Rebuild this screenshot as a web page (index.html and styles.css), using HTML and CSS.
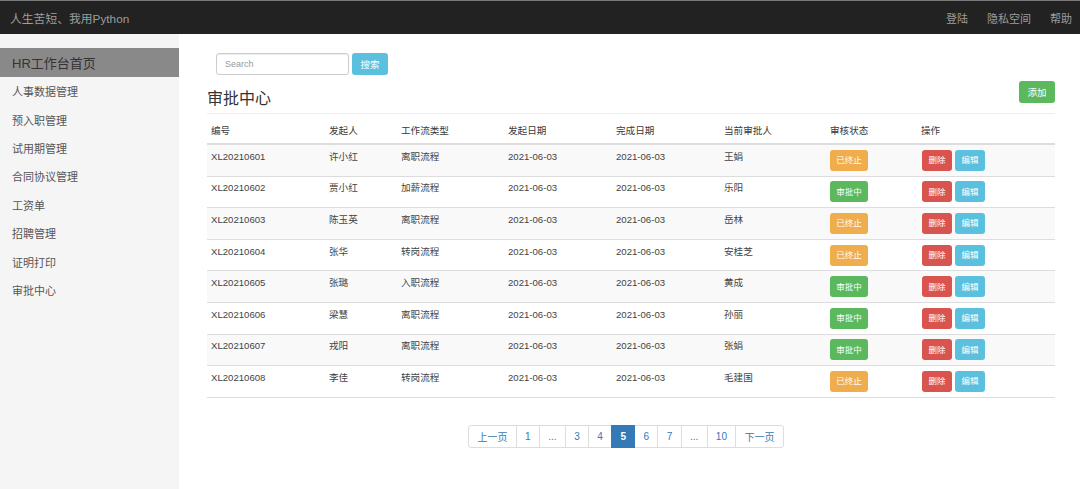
FILE: index.html
```html
<!DOCTYPE html>
<html lang="zh-CN">
<head>
<meta charset="utf-8">
<title>审批中心</title>
<link rel="stylesheet" href="styles.css">
</head>
<body>
<header class="navbar">
  <a class="brand">人生苦短、我用Python</a>
  <nav class="nav-right">
    <a>登陆</a>
    <a>隐私空间</a>
    <a>帮助</a>
  </nav>
</header>
<div class="main">
  <aside class="sidebar">
    <a class="side-item active">HR工作台首页</a>
    <a class="side-item">人事数据管理</a>
    <a class="side-item">预入职管理</a>
    <a class="side-item">试用期管理</a>
    <a class="side-item">合同协议管理</a>
    <a class="side-item">工资单</a>
    <a class="side-item">招聘管理</a>
    <a class="side-item">证明打印</a>
    <a class="side-item">审批中心</a>
  </aside>
  <section class="content">
    <form class="search">
      <input class="search-input" type="text" placeholder="Search">
      <button class="btn btn-info btn-search" type="button">搜索</button>
    </form>
    <div class="title-row">
      <h3 class="title">审批中心</h3>
      <button class="btn btn-success btn-add" type="button">添加</button>
    </div>
    <table class="table">
      <colgroup>
        <col class="c1"><col class="c2"><col class="c3"><col class="c4"><col class="c5"><col class="c6"><col class="c7"><col class="c8">
      </colgroup>
      <thead>
        <tr><th>编号</th><th>发起人</th><th>工作流类型</th><th>发起日期</th><th>完成日期</th><th>当前审批人</th><th>审核状态</th><th>操作</th></tr>
      </thead>
      <tbody>
        <tr><td>XL20210601</td><td>许小红</td><td>离职流程</td><td>2021-06-03</td><td>2021-06-03</td><td>王娟</td><td><span class="badge warn">已终止</span></td><td><div class="ops"><span class="op del">删除</span><span class="op edit">编辑</span></div></td></tr>
        <tr><td>XL20210602</td><td>贾小红</td><td>加薪流程</td><td>2021-06-03</td><td>2021-06-03</td><td>乐阳</td><td><span class="badge ok">审批中</span></td><td><div class="ops"><span class="op del">删除</span><span class="op edit">编辑</span></div></td></tr>
        <tr><td>XL20210603</td><td>陈玉英</td><td>离职流程</td><td>2021-06-03</td><td>2021-06-03</td><td>岳林</td><td><span class="badge warn">已终止</span></td><td><div class="ops"><span class="op del">删除</span><span class="op edit">编辑</span></div></td></tr>
        <tr><td>XL20210604</td><td>张华</td><td>转岗流程</td><td>2021-06-03</td><td>2021-06-03</td><td>安桂芝</td><td><span class="badge warn">已终止</span></td><td><div class="ops"><span class="op del">删除</span><span class="op edit">编辑</span></div></td></tr>
        <tr><td>XL20210605</td><td>张璐</td><td>入职流程</td><td>2021-06-03</td><td>2021-06-03</td><td>黄成</td><td><span class="badge ok">审批中</span></td><td><div class="ops"><span class="op del">删除</span><span class="op edit">编辑</span></div></td></tr>
        <tr><td>XL20210606</td><td>梁慧</td><td>离职流程</td><td>2021-06-03</td><td>2021-06-03</td><td>孙丽</td><td><span class="badge ok">审批中</span></td><td><div class="ops"><span class="op del">删除</span><span class="op edit">编辑</span></div></td></tr>
        <tr><td>XL20210607</td><td>戎阳</td><td>离职流程</td><td>2021-06-03</td><td>2021-06-03</td><td>张娟</td><td><span class="badge ok">审批中</span></td><td><div class="ops"><span class="op del">删除</span><span class="op edit">编辑</span></div></td></tr>
        <tr><td>XL20210608</td><td>李佳</td><td>转岗流程</td><td>2021-06-03</td><td>2021-06-03</td><td>毛建国</td><td><span class="badge warn">已终止</span></td><td><div class="ops"><span class="op del">删除</span><span class="op edit">编辑</span></div></td></tr>
      </tbody>
    </table>
    <div class="pager-wrap">
      <ul class="pagination">
        <li><a>上一页</a></li>
        <li><a>1</a></li>
        <li><a>...</a></li>
        <li><a>3</a></li>
        <li><a>4</a></li>
        <li class="active"><a>5</a></li>
        <li><a>6</a></li>
        <li><a>7</a></li>
        <li><a>...</a></li>
        <li><a>10</a></li>
        <li><a>下一页</a></li>
      </ul>
    </div>
  </section>
</div>
</body>
</html>
```

FILE: styles.css
```css
* { box-sizing: border-box; }

html, body {
  margin: 0;
  padding: 0;
  background: #fff;
  font-family: "Liberation Sans", Arial, "Noto Sans CJK SC", sans-serif;
  color: #333;
}

.navbar {
  height: 34px;
  background: #222;
  border-top: 1px solid #7a7a7a;
  display: flex;
  align-items: center;
  justify-content: space-between;
  padding: 0 8px 0 10px;
}

.brand {
  font-size: 11.8px;
  color: #9d9d9d;
}

.nav-right {
  display: flex;
  gap: 19px;
}

.nav-right a {
  font-size: 11px;
  color: #9d9d9d;
}

.main {
  display: flex;
  min-height: 455px;
}

.sidebar {
  width: 179px;
  flex: none;
  background: #f5f5f5;
  padding-top: 14px;
  display: flex;
  flex-direction: column;
}

.side-item {
  display: flex;
  align-items: center;
  height: 28.4px;
  padding-left: 12px;
  font-size: 11px;
  color: #555;
}

.side-item.active {
  height: 29px;
  background: #898989;
  color: #333;
  font-size: 13px;
}

.content {
  flex: 1;
  padding: 19px 25px 0 28px;
}

.search {
  display: flex;
  gap: 3px;
  margin: 0 0 0 9px;
}

.search-input {
  width: 133px;
  height: 22px;
  border: 1px solid #ccc;
  border-radius: 3px;
  padding: 0 8px;
  font-family: inherit;
  font-size: 9px;
  color: #555;
  box-shadow: inset 0 1px 1px rgba(0,0,0,.075);
}

.search-input::placeholder { color: #999; }

.btn {
  border: 0;
  border-radius: 3px;
  color: #fff;
  font-family: inherit;
  height: 22px;
  padding: 0;
  font-size: 9.5px;
}

.btn-info { background: #5bc0de; }
.btn-success { background: #5cb85c; }
.btn-search { width: 36px; }

.title-row {
  display: flex;
  justify-content: space-between;
  align-items: flex-start;
  height: 38px;
}

.title {
  margin: 13px 0 0;
  font-size: 16px;
  line-height: 22px;
  font-weight: normal;
  color: #333;
}

.btn-add {
  width: 36px;
  margin-top: 6px;
}

.table {
  width: 100%;
  border-collapse: collapse;
  table-layout: fixed;
  font-size: 9.6px;
  border-top: 1px solid #eee;
}

.c1 { width: 118px; }
.c2 { width: 72px; }
.c3 { width: 107px; }
.c4 { width: 108px; }
.c5 { width: 108px; }
.c6 { width: 106px; }
.c7 { width: 91px; }
.c8 { width: auto; }

.table th {
  text-align: left;
  font-weight: normal;
  padding: 10px 4px 5px;
  line-height: 14px;
  border-bottom: 2px solid #ddd;
  color: #3a3a3a;
}

.table td {
  vertical-align: top;
  padding: 4.8px 4px;
  line-height: 14px;
  border-top: 1px solid #ddd;
  color: #444;
}

.table tbody tr:first-child td { border-top: 0; }
.table tbody tr:nth-child(odd) { background: #f9f9f9; }
.table tbody tr:last-child td { border-bottom: 1px solid #ddd; }

.badge {
  display: inline-flex;
  align-items: center;
  justify-content: center;
  width: 38px;
  height: 21px;
  border-radius: 3px;
  color: #fff;
  font-size: 8.5px;
}

.badge.warn { background: #f0ad4e; }
.badge.ok { background: #5cb85c; }

.ops {
  display: flex;
  gap: 3px;
  padding-left: 1px;
}

.op {
  display: inline-flex;
  align-items: center;
  justify-content: center;
  width: 30px;
  height: 21px;
  border-radius: 3px;
  color: #fff;
  font-size: 8.5px;
}

.op.del { background: #d9534f; }
.op.edit { background: #5bc0de; }

.pager-wrap {
  display: flex;
  justify-content: center;
  margin-top: 27px;
  padding-right: 10px;
}

.pagination {
  list-style: none;
  margin: 0;
  padding: 0;
  display: flex;
}

.pagination li a {
  display: flex;
  align-items: center;
  height: 23px;
  padding: 0 8.3px;
  border: 1px solid #ddd;
  margin-left: -1px;
  color: #337ab7;
  font-size: 10px;
  background: #fff;
}

.pagination li:first-child a {
  margin-left: 0;
  border-radius: 3px 0 0 3px;
}

.pagination li:last-child a { border-radius: 0 3px 3px 0; }

.pagination li.active a {
  background: #337ab7;
  border-color: #337ab7;
  color: #fff;
  font-weight: bold;
  position: relative;
  z-index: 1;
}
```
